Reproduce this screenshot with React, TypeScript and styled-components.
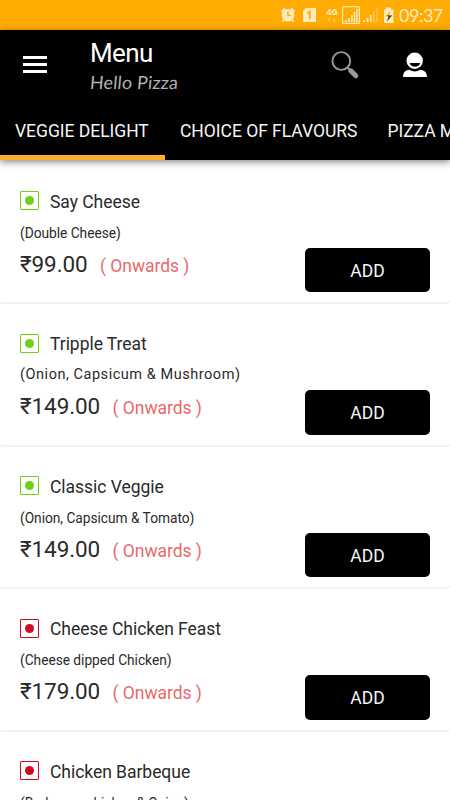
import React from 'react';
import styled, { createGlobalStyle } from 'styled-components';

const Global = createGlobalStyle`
  * { box-sizing: border-box; }
  html, body { margin: 0; background: #fff; overflow: hidden; }
  body { font-family: Roboto, "Noto Sans", sans-serif; color: #2a2a2a; }
  button { font-family: inherit; border: 0; padding: 0; background: none; }
`;

const Screen = styled.div`
  width: 450px;
  height: 800px;
  overflow: hidden;
  display: flex;
  flex-direction: column;
  background: #fff;
`;

const StatusBar = styled.div`
  height: 30px;
  flex: none;
  background: #ffab02;
  display: flex;
`;

const StatusIcons = styled.svg`
  margin-left: 276px;
  width: 120px;
  height: 30px;
  flex: none;
  display: block;
`;

const Clock = styled.time`
  margin-left: 3px;
  font: 400 18px/31px Lato, sans-serif;
  letter-spacing: -0.5px;
  color: #ffeac0;
`;

const Header = styled.header`
  height: 130px;
  flex: none;
  position: relative;
  z-index: 1;
  background: #000;
  color: #fff;
  box-shadow: 0 2px 7px rgba(0, 0, 0, 0.48);
  display: flex;
  flex-direction: column;
`;

const AppBar = styled.div`
  height: 75px;
  display: flex;
  align-items: flex-start;
`;

const MenuButton = styled.button`
  margin: 26px 0 0 23px;
  width: 24px;
  height: 17px;
  display: flex;
  flex-direction: column;
  justify-content: space-between;
`;

const MenuLine = styled.span`
  height: 3px;
  width: 24px;
  background: #fff;
`;

const Titles = styled.div`
  margin: 8px 0 0 43px;
  width: 240px;
`;

const Title = styled.h1`
  margin: 0;
  font-size: 26px;
  letter-spacing: -0.6px;
  line-height: 30px;
  font-weight: 400;
`;

const Subtitle = styled.div`
  width: max-content;
  font: 400 18px/29px Lato, sans-serif;
  letter-spacing: 0.15px;
  transform: skewX(-5deg);
  color: #b2b2b2;
`;

const HeaderIcon = styled.svg<{ $gap?: number }>`
  margin: 20px 0 0 ${(p) => p.$gap ?? 0}px;
  width: 30px;
  height: 30px;
  flex: none;
`;

const Tabs = styled.nav`
  display: flex;
  height: 55px;
  overflow: hidden;
`;

const Tab = styled.button<{ $active?: boolean }>`
  height: 55px;
  flex: none;
  min-width: ${(p) => (p.$active ? 165 : 0)}px;
  padding: 2px 15px 0;
  text-align: left;
  color: #f5f5f5;
  font-size: 17.5px;
  letter-spacing: -0.03px;
  line-height: 48px;
  white-space: nowrap;
  border-bottom: 5px solid ${(p) => (p.$active ? '#ffb027' : 'transparent')};
`;

const List = styled.main`
  flex: 1;
  min-height: 0;
  overflow: hidden;
  padding-top: 1.5px;
`;

const Card = styled.article`
  height: 142.5px;
  padding: 29px 20px 0;
  border-bottom: 2px solid #f2f2f2;
  border-radius: 3px;
`;

const NameRow = styled.div`
  display: flex;
  align-items: center;
  height: 22px;
`;

const DietMark = styled.span<{ $color: string }>`
  width: 19px;
  height: 19px;
  border: 1.5px solid ${(p) => p.$color};
  border-radius: 1px;
  display: grid;
  place-items: center;
  margin-top: -2px;

  &::after {
    content: '';
    width: 9px;
    height: 9px;
    border-radius: 50%;
    background: ${(p) => p.$color};
  }
`;

const Name = styled.h2`
  margin: 0 0 0 11px;
  font-size: 17.5px;
  letter-spacing: -0.04px;
  font-weight: 400;
  line-height: 22px;
`;

const Description = styled.p<{ $wide?: boolean }>`
  margin: 11px 0 0;
  font-size: ${(p) => (p.$wide ? 14.5 : 13.75)}px;
  letter-spacing: ${(p) => (p.$wide ? 0.54 : -0.03)}px;
  line-height: 18px;
  white-space: nowrap;
`;

const PriceRow = styled.div`
  display: flex;
  align-items: flex-start;
`;

const Price = styled.span`
  margin-top: 8px;
  font-size: 22.5px;
  letter-spacing: -0.1px;
  line-height: 28px;
`;

const Onwards = styled.span`
  margin: 12px 0 0 12.5px;
  font-size: 17.5px;
  letter-spacing: -0.05px;
  line-height: 24px;
  color: #e9696b;
`;

const AddButton = styled.button`
  margin: 6px 0 0 auto;
  width: 125px;
  height: 44.5px;
  padding-top: 1.5px;
  border-radius: 5px;
  background: #000;
  color: #f5f5f5;
  font-size: 17.5px;
`;

const GREEN = '#6ed019';
const RED = '#d00a20';

const items = [
  { name: 'Say Cheese', description: '(Double Cheese)', price: '₹99.00', color: GREEN },
  { name: 'Tripple Treat', description: '(Onion, Capsicum & Mushroom)', price: '₹149.00', color: GREEN, wide: true },
  { name: 'Classic Veggie', description: '(Onion, Capsicum & Tomato)', price: '₹149.00', color: GREEN },
  { name: 'Cheese Chicken Feast', description: '(Cheese dipped Chicken)', price: '₹179.00', color: RED },
  { name: 'Chicken Barbeque', description: '(Barbeque chicken & Onion)', price: '₹179.00', color: RED },
];

function Indicators() {
  return (
    <StatusIcons viewBox="276 0 120 30" fill="#ffeac0">
      <circle cx="288" cy="15.3" r="6.3" />
      <path d="M281.5 11.5l3.5-3M294.5 11.5l-3.5-3M283.6 20l-1.3 1.8M292.4 20l1.3 1.8" stroke="#ffeac0" strokeWidth="2" />
      <path d="M288 11.5v4h3" stroke="#ffab02" strokeWidth="1.4" fill="none" />
      <path d="M306 8h10v14h-13V11z" />
      <path d="M307.3 13.2l2.5-1.5v7.5" stroke="#ffab02" strokeWidth="1.8" fill="none" />
      <text x="332" y="15" fontFamily="Noto Sans" fontWeight="700" fontSize="9" textAnchor="middle">4G</text>
      <path d="M329 18v4M328 19.5l1-1.5 1 1.5M334 18v4M333 20.5l1 1.5 1-1.5" stroke="#ffd27b" strokeWidth=".8" fill="none" />
      <rect x="342.6" y="6.6" width="16.8" height="16.8" rx="1" fill="none" stroke="#ffeac0" strokeWidth="1.2" />
      <path d="M345 20h1.7v2H345zM348 18h1.7v4H348zM351 15h1.7v7H351zM353.7 12h1.6v10h-1.6zM356.2 9h1.4v13h-1.4z" />
      <path d="M363 20.5h2V22h-2zM366.5 18h2v4h-2zM370 15h1.6v7H370z" />
      <path d="M373.2 11.5h1.2V22h-1.2zM376.5 8h1.1v14h-1.1z" opacity=".55" />
      <path d="M386 7.5h5v2h2.5V23H384V9.5h2z" />
      <path d="M390.5 11l-5 5.3h3l-1.5 5 5-6h-3z" fill="#ffab02" />
      <path d="M387 15.5h5l-5 6 1.5-4.8z" fill="#4c4027" />
    </StatusIcons>
  );
}

export default function App() {
  return (
    <Screen>
      <Global />
      <StatusBar>
        <Indicators />
        <Clock>09:37</Clock>
      </StatusBar>
      <Header>
        <AppBar>
          <MenuButton aria-label="Open navigation">
            <MenuLine />
            <MenuLine />
            <MenuLine />
          </MenuButton>
          <Titles>
            <Title>Menu</Title>
            <Subtitle>Hello Pizza</Subtitle>
          </Titles>
          <HeaderIcon viewBox="0 0 30 30">
            <circle cx="11.3" cy="11" r="8.9" fill="none" stroke="#999" strokeWidth="1.9" />
            <path d="M17.5 17.5l3 3" stroke="#999" strokeWidth="2" />
            <path d="M20.8 20.8l5 4.9" stroke="#999" strokeWidth="5" strokeLinecap="round" />
          </HeaderIcon>
          <HeaderIcon viewBox="0 0 30 30" $gap={40}>
            <circle cx="14.7" cy="10.7" r="8.2" fill="#fff" />
            <path d="M9.7 13h10.5c-1 5-9.5 5-10.5 0z" fill="#000" />
            <path d="M3 27c0-5 3-7 6.6-7.2 3 2.2 7.3 2.2 10.3 0C23.6 20 27 22 27 27z" fill="#fff" />
          </HeaderIcon>
        </AppBar>
        <Tabs>
          <Tab $active>VEGGIE DELIGHT</Tab>
          <Tab>CHOICE OF FLAVOURS</Tab>
          <Tab>PIZZA MANIA</Tab>
        </Tabs>
      </Header>
      <List>
        {items.map((item) => (
          <Card key={item.name}>
            <NameRow>
              <DietMark $color={item.color} />
              <Name>{item.name}</Name>
            </NameRow>
            <Description $wide={item.wide}>{item.description}</Description>
            <PriceRow>
              <Price>{item.price}</Price>
              <Onwards>( Onwards )</Onwards>
              <AddButton>ADD</AddButton>
            </PriceRow>
          </Card>
        ))}
      </List>
    </Screen>
  );
}
